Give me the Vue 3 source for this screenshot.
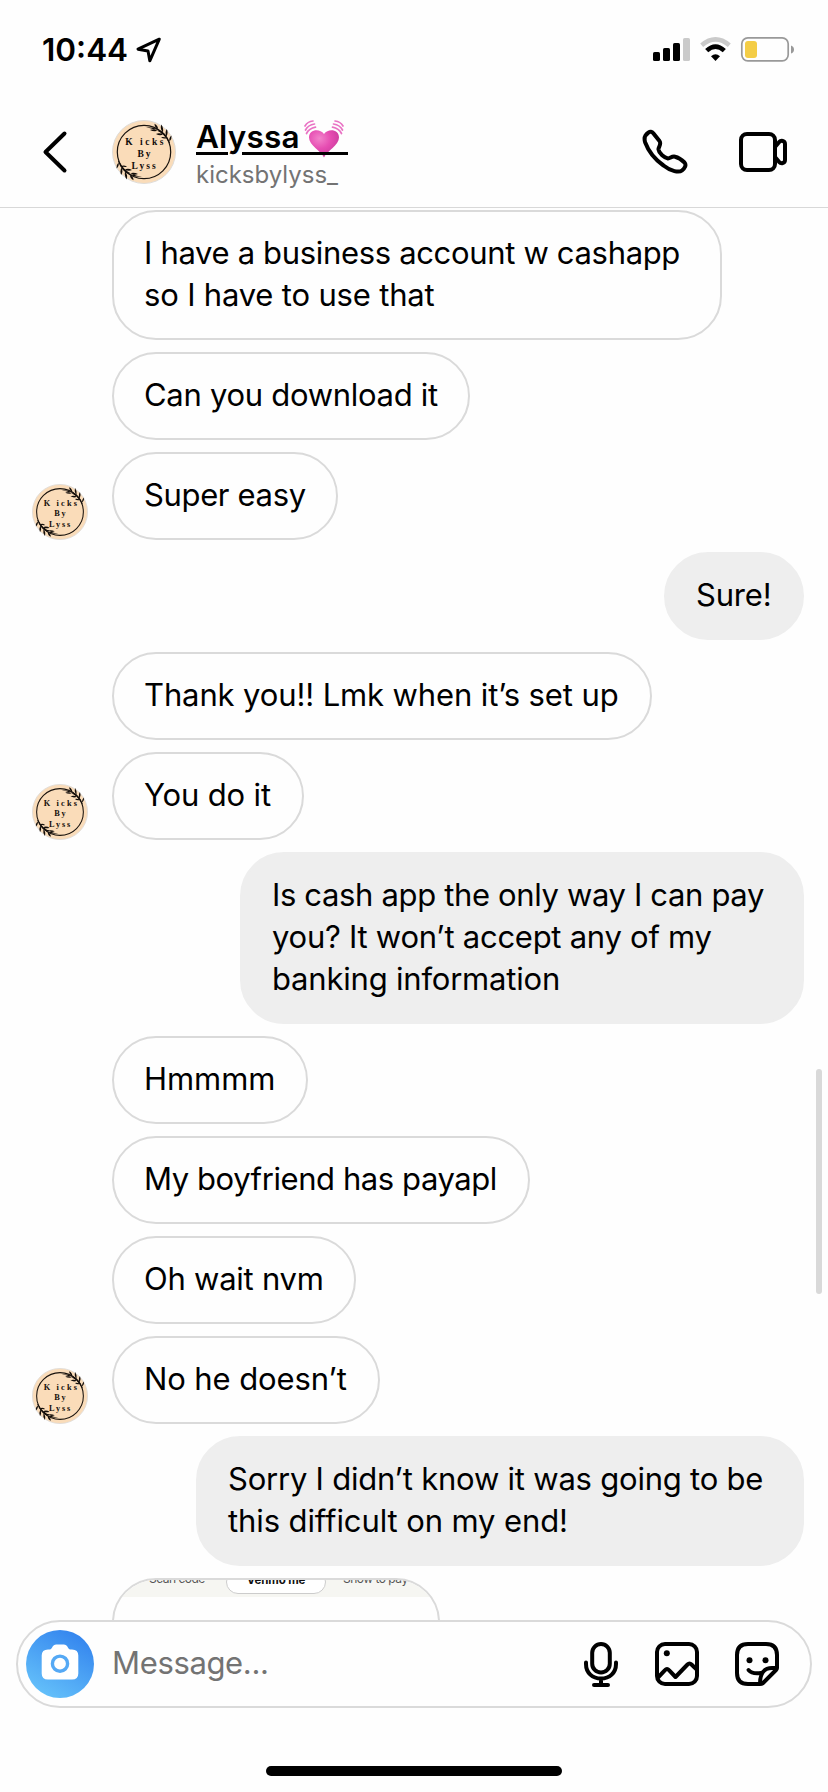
<script setup>
import { h } from 'vue'

// Each line is [text, letter-spacing in px]; width is the bubble's outer width.
const messages = [
  { width: 610, lines: [['I have a business account w cashapp', -0.33], ['so I have to use that', -0.18]] },
  { width: 358, lines: [['Can you download it', -0.29]] },
  { width: 226, lines: [['Super easy', -0.35]], avatar: true },
  { width: 140, lines: [['Sure!', -0.2]], mine: true },
  { width: 540, lines: [['Thank you!! Lmk when it’s set up', -0.12]] },
  { width: 192, lines: [['You do it', -0.15]], avatar: true },
  { width: 564, lines: [['Is cash app the only way I can pay', -0.35], ['you? It won’t accept any of my', -0.26], ['banking information', -0.2]], mine: true },
  { width: 196, lines: [['Hmmmm', -0.05]] },
  { width: 418, lines: [['My boyfriend has payapl', -0.42]] },
  { width: 244, lines: [['Oh wait nvm', -0.24]] },
  { width: 268, lines: [['No he doesn’t', -0.1]], avatar: true },
  { width: 608, lines: [['Sorry I didn’t know it was going to be', -0.22], ['this difficult on my end!', -0.1]], mine: true },
]

// Leaf spray on the upper right of the logo; the lower left one is the same shape turned half way round.
const spray = 'M34 7.2Q46 6.500 53 14Q56.500 18 58 23L57 23Q54.500 17.500 51 14.500Q45 9 34 7.200ZM46 9Q46 5.500 42.500 3.800Q42.500 7.500 46 9ZM47 10.300Q41.500 8.300 38 10Q42.500 12.300 47 10.300ZM51 12.500Q51.800 8 49.300 4.500Q47.800 9 51 12.500ZM51.500 14.300Q47 12.500 44 14Q48 16.500 51.500 14.300ZM54.500 16.500Q56.500 12.500 54.800 9Q52.500 12.500 54.500 16.500ZM54.800 18Q51.500 16.300 49 17.200Q52 19.500 54.800 18ZM57.500 21.500Q60 19 59.500 15.500Q56.500 18 57.500 21.500Z'

const Logo = () =>
  h('svg', { viewBox: '0 0 64 64', class: 'logo-svg', width: '100%', height: '100%' }, [
    h('circle', { cx: 32, cy: 32, r: 31.5, fill: '#fadcb9', stroke: '#dfdcd8', 'stroke-width': 1 }),
    h('circle', { cx: 32, cy: 32, r: 26.7, fill: 'none', stroke: '#19130e', 'stroke-width': 1.2 }),
    h('path', { d: spray, fill: '#120d0a' }),
    h('path', { d: spray, fill: '#120d0a', transform: 'rotate(180 32 32)' }),
    h('g', { fill: '#120d0a', 'font-family': 'Liberation Serif, serif', 'font-weight': 700, 'font-size': 9.5 }, [
      h('text', { x: 13.3, y: 24.6, 'letter-spacing': 2.5 }, 'K icks'),
      h('text', { x: 25.5, y: 36.8, 'letter-spacing': 2 }, 'By'),
      h('text', { x: 19.5, y: 49.3, 'letter-spacing': 2.1 }, 'Lyss'),
    ]),
  ])
</script>

<template>
  <div class="screen">
    <div class="status">
      <span class="time">10:44</span>
      <svg class="loc" width="26" height="26" viewBox="0 0 26 26"><path d="M23.300 2.200 2 12.200 12 14 13.800 23.800Z" fill="none" stroke="#000" stroke-width="3" stroke-linejoin="round" /></svg>
      <svg class="sys" width="144" height="28" viewBox="0 0 144 28">
        <rect x="1" y="16" width="7" height="9" rx="1.600" />
        <rect x="11" y="12" width="7" height="13" rx="1.600" />
        <rect x="21" y="7" width="7" height="18" rx="1.600" />
        <rect x="31" y="2" width="7" height="23" rx="1.600" fill="#cacaca" />
        <g fill="none" stroke-width="4.600">
          <path d="M49.700 9.200Q63.500-2.400 77.300 9.200" stroke="#cacaca" />
          <path d="M54.700 14.600Q63.500 6.600 72.300 14.600" stroke="#000" />
        </g>
        <path d="M59 20.200Q63.500 16.500 68 20.200L63.500 25Z" />
        <rect x="89.800" y="1.800" width="46.400" height="23" rx="6" fill="none" stroke="#999" stroke-width="1.700" />
        <rect x="93" y="5" width="12" height="17" rx="3" fill="#f4cd46" />
        <path d="M139 9.500Q142 10.500 142 13.500T139 17.500Z" fill="#999" />
      </svg>
    </div>

    <header class="header">
      <svg class="back" width="26" height="44" viewBox="0 0 26 44"><path d="M22.500 3.500 3.500 22 22.500 40.500" fill="none" stroke="#000" stroke-width="4" stroke-linecap="round" stroke-linejoin="round" /></svg>
      <div class="avatar-lg"><Logo /></div>
      <div class="who">
        <div class="name">
          <span>Alyssa</span>
          <svg class="heart" width="40" height="38" viewBox="0 0 40 38">
            <defs>
              <radialGradient id="hg" cx=".35" cy=".3" r=".75"><stop offset="0" stop-color="#f283cb" /><stop offset=".5" stop-color="#e64db2" /><stop offset="1" stop-color="#c93a9b" /></radialGradient>
            </defs>
            <path d="M20 37.500C17 31 5 25 5 17.500C5 9.500 15.500 8 20 14C24.500 8 35 9.500 35 17.500C35 25 23 31 20 37.500Z" fill="url(#hg)" />
            <g fill="none" stroke="#e973c4" stroke-width="1.700" stroke-linecap="round">
              <path d="M1 6Q3.500 1.500 9 1" /><path d="M1.500 10Q4 5 10.500 4" /><path d="M2.500 13.500Q5 8.500 11.500 7.200" />
              <path d="M39 6Q36.500 1.500 31 1" /><path d="M38.500 10Q36 5 29.500 4" /><path d="M37.500 13.500Q35 8.500 28.500 7.200" />
            </g>
          </svg>
          <i class="rule"></i>
        </div>
        <div class="handle">kicksbylyss_</div>
      </div>
      <svg class="phone" width="48" height="48" viewBox="0 0 48 48"><path d="M7.500 4.500C9 3.300 11 3.500 12.300 5.200L18.500 13C20.800 16.500 17.300 18.500 17.500 21.500C18 25.500 23.500 30 27 30.500C29.500 30.500 30.500 28 34 28.700C37.500 29.500 41 32 43.500 34.500C45.800 37.200 43.500 40.500 41 42.500C38 44.800 30 43.500 22.500 37.500C14 31.500 7 22 4.200 14.500C2.600 9.800 4.500 6.500 7.500 4.500Z" fill="none" stroke="#000" stroke-width="4" stroke-linejoin="round" /></svg>
      <svg class="video" width="50" height="42" viewBox="0 0 50 42"><g fill="none" stroke="#000" stroke-width="4" stroke-linejoin="round"><rect x="3" y="3" width="34" height="36" rx="6" /><path d="M37 16 41 11.200C43 9 47 9.500 47 13V29C47 32.500 43 33 41 30.800L37 26" /></g></svg>
    </header>

    <main class="thread">
      <div v-for="(m, i) in messages" :key="i" class="row" :class="{ mine: m.mine }">
        <div v-if="!m.mine" class="gutter"><div v-if="m.avatar" class="avatar-sm"><Logo /></div></div>
        <div class="bubble" :style="{ width: m.width + 'px' }">
          <div v-for="[text, spacing] in m.lines" :key="text" class="line" :style="{ letterSpacing: spacing + 'px' }">{{ text }}</div>
        </div>
      </div>
      <div class="row">
        <div class="gutter"></div>
        <div class="attachment">
          <div class="tabs"><span class="tab">Scan code</span><b class="tab active">Venmo me</b><span class="tab">Show to pay</span></div>
        </div>
      </div>
      <i class="scrollbar"></i>
    </main>

    <footer class="footer">
      <div class="composer">
        <div class="camera">
          <svg width="38" height="36" viewBox="0 0 38 36"><path d="M7 5.500H8.500C10.500 5.500 10.500 4 12 2Q13 .5 15 .5H23Q25 .5 26 2C27.500 4 27.500 5.500 29.500 5.500H31Q37.300 5.500 37.300 11.500V29.500Q37.300 35.500 31 35.500H7Q.7 35.500 .7 29.500V11.500Q.7 5.500 7 5.500Z" fill="#fff" /><circle cx="19" cy="19.700" r="7.600" fill="none" stroke="#55a9f5" stroke-width="3.400" /></svg>
        </div>
        <span class="placeholder">Message...</span>
        <svg class="mic" width="36" height="46" viewBox="0 0 36 46"><g fill="none" stroke="#000" stroke-width="4" stroke-linecap="round"><rect x="9.200" y="3" width="17.600" height="28.500" rx="8.800" /><path d="M3 21.500V23C3 32 9.500 37.500 18 37.500S33 32 33 23V21.500M18 37.500V44M11 44H25" /></g></svg>
        <svg class="pic" width="46" height="46" viewBox="0 0 46 46"><g fill="none" stroke="#000" stroke-width="4" stroke-linejoin="round"><rect x="3" y="3" width="40" height="40" rx="8" /><path d="M4 36.500 11 29.200Q13 27 15 29.200L21.500 36 33.500 23.500Q35.500 21.500 37.500 23.500L43 28.800" /></g><circle cx="12.800" cy="12.200" r="3" /></svg>
        <svg class="sticker" width="46" height="46" viewBox="0 0 46 46"><g fill="none" stroke="#000" stroke-width="4" stroke-linejoin="round" stroke-linecap="round"><path d="M26 43H14Q3 43 3 32V14Q3 3 14 3H32Q43 3 43 14V27Q43 28 42 29L29 42Q28 43 26 43C26 33 29 27 38 27H43" /><path d="M14.500 29C17.500 32.500 22 32.800 27 32" /></g><circle cx="15.500" cy="19.200" r="3" /><circle cx="31.500" cy="19.200" r="3" /></svg>
      </div>
      <i class="home"></i>
    </footer>
  </div>
</template>

<style>
body { background: #fefefe; }
</style>

<style scoped>
.screen { width: 828px; height: 1792px; display: flex; flex-direction: column; overflow: hidden; background: #fefefe; color: #000; font-family: Inter, "Liberation Sans", sans-serif; }
svg { display: block; flex: none; }
.status { height: 100px; box-sizing: border-box; padding: 0 32px 0 42px; display: flex; align-items: center; flex: none; }
.time { font-size: 31.500px; font-weight: 600; width: 86px; white-space: nowrap; padding-bottom: 2px; }
.loc { margin-left: 8px; }
.sys { margin-left: auto; }
.header { height: 108px; box-sizing: border-box; flex: none; border-bottom: 1px solid #d8d8d8; display: flex; align-items: flex-start; }
.back { margin: 30px 0 0 42px; }
.avatar-lg { width: 64px; height: 64px; margin: 20px 0 0 44px; }
.who { margin: 19px 0 0 20px; width: 300px; }
.name { position: relative; height: 38px; width: 152px; font-size: 31.500px; line-height: 36px; font-weight: 600; letter-spacing: .2px; }
.heart { position: absolute; left: 108px; top: 1px; }
.rule { position: absolute; left: 0; top: 33px; width: 152px; height: 3px; background: linear-gradient(90deg, #000 32px, transparent 32px 46px, #000 46px); }
.handle { font-size: 24px; line-height: 36px; color: #737373; }
.phone { margin: 28px 0 0 auto; }
.video { margin: 31px 40px 0 49px; }
.thread { position: relative; flex: 1; min-height: 0; overflow: hidden; padding-top: 2px; display: flex; flex-direction: column; gap: 12px; }
.row { display: flex; flex: none; }
.mine { justify-content: flex-end; padding-right: 24px; }
.gutter { width: 112px; display: flex; align-items: flex-end; flex: none; }
.avatar-sm { width: 56px; height: 56px; margin-left: 32px; }
.bubble { box-sizing: border-box; border: 2px solid #dadada; border-radius: 44px; padding: 20px 30px 22px; font-size: 31px; line-height: 42px; white-space: nowrap; }
.mine .bubble { background: #eee; border-color: #eee; }
.attachment { box-sizing: border-box; width: 328px; height: 90px; border: 2px solid #dadada; border-radius: 44px 44px 0 0; overflow: hidden; }
.tabs { height: 17px; background: #f6f6f2; display: flex; align-items: flex-start; font-size: 12px; line-height: 16px; color: #555; white-space: nowrap; padding-left: 35px; letter-spacing: -.5px; }
.tab { width: 55px; margin-top: -9px; }
.active { box-sizing: border-box; width: 100px; height: 24px; margin: -10px 17px 0 22px; padding-top: 1px; text-align: center; color: #111; background: #fff; border: 1px solid #ccc; border-radius: 14px; font-size: 11.500px; letter-spacing: -.1px; }
.scrollbar { position: absolute; left: 816px; top: 861px; width: 6px; height: 225px; border-radius: 3px; background: #d9d9d9; }
.footer { flex: none; height: 172px; }
.composer { box-sizing: border-box; width: 796px; height: 88px; margin-left: 16px; border: 2px solid #dadada; border-radius: 44px; display: flex; align-items: center; padding: 0 30px 0 8px; background: #fefefe; }
.camera { width: 68px; height: 68px; border-radius: 50%; background: linear-gradient(30deg, #68c5fb 5%, #3384ee 90%); display: flex; align-items: center; justify-content: center; flex: none; padding-bottom: 4px; box-sizing: border-box; }
.placeholder { font-size: 31px; letter-spacing: -.35px; color: #737373; margin-left: 18px; padding-bottom: 3px; flex: 1; }
.pic { margin-left: 35px; }
.sticker { margin-left: 34px; }
.home { display: block; width: 296px; height: 10px; border-radius: 5px; background: #000; margin: 58px 0 0 266px; }
</style>
